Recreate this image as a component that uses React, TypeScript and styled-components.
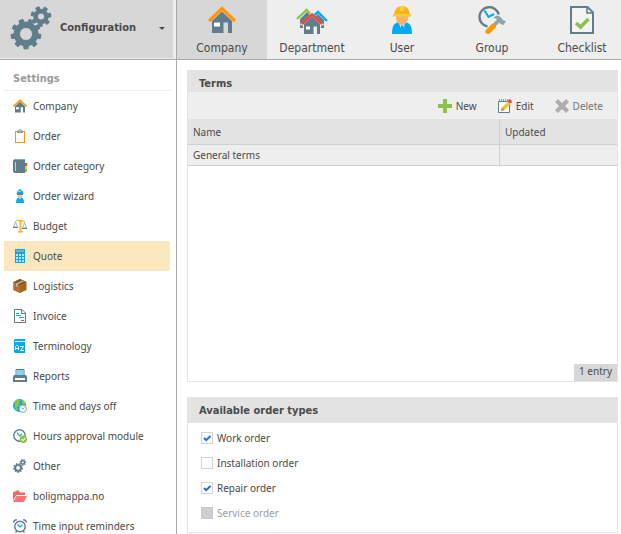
import React, { useState } from "react";
import styled, { createGlobalStyle } from "styled-components";

const color = {
  slate: "#607d8b",
  orange: "#ff9800",
  blue: "#03a9f4",
  green: "#8bc34a",
  red: "#f44336",
  text: "#4a4a4a",
  line: "#a9a9a9",
  head: "#e3e3e3",
  pale: "#eeeeee",
  grey: "#d7d7d7",
};

const displayFont = `"DejaVu Sans Condensed", Tahoma, "Noto Sans", sans-serif`;

const GlobalStyle = createGlobalStyle`
  * { box-sizing: border-box; }
  body {
    margin: 0;
    background: #fff;
    color: ${color.text};
    font-family: "Noto Sans", "Open Sans", sans-serif;
    font-size: 10px;
    line-height: 14px;
  }
  button, input { font: inherit; color: inherit; margin: 0; }
`;

/* ---------- icons ---------- */

function gearPath(cx: number, cy: number, outer: number, root: number, hole: number, teeth: number, turn: number) {
  const step = (Math.PI * 2) / teeth;
  const points: string[] = [];
  for (let i = 0; i < teeth; i++) {
    const a = turn + i * step;
    const corners: [number, number][] = [
      [root, -0.27],
      [outer, -0.2],
      [outer, 0.2],
      [root, 0.27],
    ];
    corners.forEach(([r, k]) => {
      const t = a + k * step;
      points.push(`${(cx + r * Math.cos(t)).toFixed(2)} ${(cy + r * Math.sin(t)).toFixed(2)}`);
    });
  }
  return (
    `M${points.join("L")}Z` +
    `M${cx - hole} ${cy}a${hole} ${hole} 0 1 0 ${hole * 2} 0a${hole} ${hole} 0 1 0 ${-hole * 2} 0Z`
  );
}

const GearsIcon = ({ size }: { size: number }) => (
  <svg width={size} height={size} viewBox="0 0 44 44" aria-hidden="true">
    <g fill={color.slate} fillRule="evenodd" stroke={color.slate} strokeWidth="1" strokeLinejoin="round">
      <path d={gearPath(16, 28, 15, 12, 6.5, 9, Math.PI / 2)} />
      <path d={gearPath(31, 10.5, 10, 7.3, 3.6, 7, -0.15)} />
    </g>
  </svg>
);

const HouseIcon = ({ size }: { size: number }) => (
  <svg width={size} height={size} viewBox="0 0 28 28" aria-hidden="true">
    <path d="M4 15 14 5.500 24 15V27H20V16.500H15.500V27H4Z" fill={color.slate} />
    <path d="M6 16.500H12V20.500H6Z" fill="#fff" />
    <path d="M1 15 14 2.500 27 15" fill="none" stroke={color.orange} strokeWidth="3.200" />
  </svg>
);

const HousesIcon = () => (
  <svg width="32" height="28" viewBox="0 0 32 28" aria-hidden="true">
    <path d="M4 13 11 6 17 12V22H4ZM18 12 22 8 28 14V22H18Z" fill={color.slate} />
    <path d="M1 13 10.500 4 14 7.500" fill="none" stroke={color.green} strokeWidth="2.400" />
    <path d="M18 9.500 22 6 31 15" fill="none" stroke={color.blue} strokeWidth="2.400" />
    <path d="M4 18.500 16 6.500 28 18.500 25 20V28H7V20Z" fill="#eee" />
    <path d="M8 18 16 10.500 24 18V28H21V20.500H17.500V28H8Z" fill={color.slate} />
    <path d="M10 20.500H14V23.500H10Z" fill="#fff" />
    <path d="M6 18 16 8.500 26 18" fill="none" stroke={color.red} strokeWidth="2.600" />
  </svg>
);

const WorkerIcon = () => (
  <svg width="24" height="28" viewBox="0 0 24 28" aria-hidden="true">
    <path d="M2 28C2 20 4 17 8 16.500H16C20 17 22 20 22 28Z" fill={color.blue} />
    <path d="M8.500 16H15.500L12 25Z" fill="#eee" />
    <path d="M12 18.500 13.500 21 12 28 10.500 21Z" fill={color.blue} />
    <path d="M6 9H18V12C18 16 15 19 12 19S6 16 6 12Z" fill="#f6b26b" />
    <path d="M4 10C4 4 7 0 12 0S20 4 20 10Z" fill="#fbb11f" />
    <path d="M9 .500H15L14 5H10Z" fill="#ffd23c" />
    <path d="M3 8H21V10.500H3Z" fill="#ffcb2e" />
  </svg>
);

const ClockHammerIcon = () => (
  <svg width="28" height="28" viewBox="0 0 28 28" aria-hidden="true">
    <path d="M20.800 8.500A9.800 9.800 0 1 0 9.500 20.600" fill="none" stroke={color.slate} strokeWidth="2.400" />
    <path d="M6.500 4.500 10.500 11 16 8" fill="none" stroke={color.blue} strokeWidth="2" />
    <path d="M15 20.500 21 14" stroke="#90a4ae" strokeWidth="3.800" />
    <path d="M15.500 11.500 18.500 9.500 22 10.500 25.500 14.500 28 15 25.500 19 22.500 18 18.500 13Z" fill="#90a4ae" />
    <path d="M10 25.500 15 20.500" stroke={color.orange} strokeWidth="5.200" strokeLinecap="round" />
  </svg>
);

const ChecklistIcon = () => (
  <svg width="24" height="28" viewBox="0 0 24 28" aria-hidden="true">
    <path d="M1 1H17.500L23 6.500V27H1Z" fill="#f3f3f3" stroke={color.slate} strokeWidth="2" />
    <path d="M17 1V7H23" fill="none" stroke={color.slate} strokeWidth="1.600" />
    <path d="M6 17 10.500 21 18.500 13" fill="none" stroke={color.green} strokeWidth="3.600" />
  </svg>
);

const Small = ({ children }: { children: React.ReactNode }) => (
  <svg width="14" height="14" viewBox="0 0 14 14" aria-hidden="true">
    {children}
  </svg>
);

const smallIcons: Record<string, React.ReactNode> = {
  house: <HouseIcon size={14} />,
  gears: <GearsIcon size={14} />,
  clipboard: (
    <Small>
      <rect x="2" y="2" width="10" height="12" fill={color.orange} />
      <rect x="3" y="3" width="8" height="10" fill="#fff" />
      <path d="M4 4V2L5.500 1C6 -.2 8 -.2 8.500 1L10 2V4Z" fill="#90a4ae" />
      <path d="M6.500 1H7.500V2H6.500Z" fill="#fff" />
    </Small>
  ),
  book: (
    <Small>
      <path d="M1.500 0H12V14H1.500L0 12.500V1.500Z" fill={color.slate} />
      <path d="M2.500 3V12" stroke="#c3cfd5" />
      <path d="M1 .5H12" stroke="#90a4ae" />
      <path d="M12 4H14V7H12Z" fill={color.red} />
      <path d="M12 7H14V10H12Z" fill="#f7c64b" />
      <path d="M12 10H14V13H12Z" fill={color.green} />
    </Small>
  ),
  wizard: (
    <Small>
      <path d="M3.500 5 4.500 2 7 0 8.500 1.500 10 2.500 10.500 5Z" fill={color.blue} />
      <path d="M5 2H8V3H5Z" fill="#8cd7fa" />
      <path d="M4 5H10V6H4Z" fill={color.slate} />
      <path d="M4.500 6H9.500V8L7 9.500 4.500 8Z" fill="#f6c9a0" />
      <path d="M3 14C3 10.500 4 9 5.500 8.500L7 10 8.500 8.500C10 9 11 10.500 11 14Z" fill={color.blue} />
    </Small>
  ),
  scales: (
    <Small>
      <path d="M3 1C5 2 6 0 8 1L12 2V3L8.500 2.500V12H10V13.500H5V12H6.500V2.500L3 2Z" fill="#fbb829" />
      <path d="M2.500 2.500 .5 8H4.500ZM11.500 3.500 9.500 9H13.500Z" fill="none" stroke="#90a4ae" strokeWidth=".8" />
      <path d="M0 8H5V9H0ZM9 9H14V10H9Z" fill={color.slate} />
    </Small>
  ),
  calculator: (
    <Small>
      <rect x="2" width="10" height="14" fill={color.blue} />
      <rect x="3" y="1" width="8" height="2" fill="#90a4ae" />
      <path d="M3 5H5V7H3ZM6 5H8V7H6ZM9 5H11V7H9ZM3 8H5V10H3ZM6 8H8V10H6ZM9 8H11V10H9ZM3 11H5V13H3ZM6 11H8V13H6ZM9 11H11V13H9Z" fill="#b9e6fb" />
    </Small>
  ),
  box: (
    <Small>
      <path d="M7 0 13.500 3V11L7 14 .5 11V3Z" fill="#a8651f" />
      <path d="M.5 3 7 6V14L.5 11Z" fill="#b5712b" />
      <path d="M7 0 13.500 3 7 6 .5 3Z" fill="#8a541c" />
      <path d="M3 4.500 9.500 1.500 11 2.200 4.500 5.200V8L3 7.500Z" fill="#b0bec5" />
    </Small>
  ),
  invoice: (
    <Small>
      <path d="M1.500 .5H9L12.500 4V13.500H1.500Z" fill="#fff" stroke={color.slate} />
      <path d="M8.500 .5V4.500H12.500" fill="none" stroke={color.slate} />
      <path d="M3 4.500H6M3 6.500H8M6 8.500H11" stroke={color.blue} />
      <path d="M8 11.500H11" stroke={color.red} />
    </Small>
  ),
  dictionary: (
    <Small>
      <path d="M1 1 2 0H12V14H2L1 13Z" fill={color.blue} />
      <path d="M2 2H12V3H2Z" fill="#e3f5fe" />
      <path d="M2.500 11V7.500L3.500 6.500H4.500L5.500 7.500V11M2.500 9.500H5.500M7 7.500H10.500L7.500 11.500H11" fill="none" stroke="#fff" />
    </Small>
  ),
  printer: (
    <Small>
      <path d="M3 7V.5H11V7" fill="#e8f4fa" stroke={color.slate} />
      <path d="M4 1H10V6H4Z" fill="#81d4fa" />
      <path d="M1 6H13L14 8V13H0V8Z" fill={color.slate} />
      <path d="M2 9H12V11H2Z" fill="#fff" />
    </Small>
  ),
  globe: (
    <Small>
      <circle cx="6.500" cy="6.500" r="6.500" fill={color.blue} />
      <path d="M1 3 4 .500 8 1 6 4 7 6 4 8 5 11 4 12 1.500 9 2 6ZM9 .500 12 3 13 6 9 5Z" fill={color.green} />
      <circle cx="9.800" cy="9.800" r="3.700" fill="#f5f5f5" stroke="#90a4ae" strokeWidth=".9" />
      <path d="M8 8.500 10 10 11.500 8.500" fill="none" stroke="#90a4ae" strokeWidth=".9" />
    </Small>
  ),
  approved: (
    <Small>
      <circle cx="6.500" cy="6.500" r="5.700" fill="#fff" stroke={color.slate} strokeWidth="1.400" />
      <path d="M4 3.500 6.500 7 9 5" fill="none" stroke={color.blue} strokeWidth="1.200" />
      <circle cx="10.300" cy="10.300" r="3.700" fill={color.green} />
      <path d="M8.500 10.300 10 11.700 12.200 9" fill="none" stroke="#fff" strokeWidth="1.100" />
    </Small>
  ),
  folder: (
    <Small>
      <path d="M0 3 2 2.500 5 1 7 3.500H12V6H4L0 12Z" fill="#f4686a" />
      <path d="M3.500 6 12 6V7H3.500L0 13V11.500Z" fill="#fff" />
      <path d="M3.500 7H14L11 13H0Z" fill="#ff7173" />
    </Small>
  ),
  alarm: (
    <Small>
      <path d="M.7 3.500C.7 2 2 .8 3.800 .8M13.300 3.500C13.300 2 12 .8 10.200 .8" fill="none" stroke={color.slate} strokeWidth="1.500" />
      <path d="M2.500 13.500 4 12M11.500 13.500 10 12" stroke={color.slate} strokeWidth="1.400" />
      <circle cx="7" cy="7.500" r="5.200" fill="#fff" stroke={color.slate} strokeWidth="1.400" />
      <path d="M4.500 5.500 7 8 9.500 6" fill="none" stroke={color.blue} strokeWidth="1.300" />
    </Small>
  ),
  plus: (
    <Small>
      <path d="M5 0H9V5H14V9H9V14H5V9H0V5H5Z" fill={color.green} />
    </Small>
  ),
  edit: (
    <Small>
      <path d="M.5 13.500V2.500H11.500V13.500Z" fill="#fff" stroke={color.slate} />
      <path d="M1 1H10" stroke="#90a4ae" strokeWidth="2" strokeDasharray="1 1" />
      <path d="M3 12 4 8.500 10 2.500 12.500 5 6.500 11Z" fill="#fbc02d" />
      <path d="M3 12 4 8.500 6.500 11Z" fill="#a1887f" />
      <path d="M9.500 3 12 5.500" stroke="#b0bec5" />
      <path d="M10 2C10.500 0 12 0 13 1S14 3.500 12.800 4.500Z" fill={color.red} />
    </Small>
  ),
  cross: (
    <Small>
      <path d="M3 0 7 4 11 0 14 3 10 7 14 11 11 14 7 10 3 14 0 11 4 7 0 3Z" fill="#adadad" />
    </Small>
  ),
};

/* ---------- layout ---------- */

const Shell = styled.div`
  display: grid;
  grid-template-columns: 177px minmax(0, 1fr);
  grid-template-rows: 60px minmax(0, 1fr);
  height: 100vh;
`;

const ModuleCell = styled.div`
  padding: 0 3px 1px 0;
  background: ${color.pale};
  border-right: 1px solid ${color.line};
  border-bottom: 1px solid ${color.line};
`;

const ModuleButton = styled.button`
  display: flex;
  align-items: center;
  gap: 6px;
  width: 100%;
  height: 100%;
  padding: 0 8px 2px 10px;
  border: 0;
  background: ${color.grey};
  font-family: ${displayFont};
  font-size: 11px;
  font-weight: bold;
  text-align: left;
`;

const ModuleName = styled.span`
  flex: 1;
`;

const Caret = styled.span`
  border: 3px solid transparent;
  border-top-color: ${color.text};
  border-bottom: 0;
`;

const Tabs = styled.nav`
  display: flex;
  overflow: hidden;
  background: ${color.pale};
  border-bottom: 1px solid ${color.line};
`;

const Tab = styled.button<{ $active: boolean }>`
  flex: none;
  display: flex;
  flex-direction: column;
  align-items: center;
  gap: 7px;
  width: 90px;
  padding: 6px 0 0;
  border: 0;
  background: ${(p) => (p.$active ? color.grey : "transparent")};
  font-family: ${displayFont};
  font-size: 12px;
`;

const Sidebar = styled.aside`
  padding: 8px 5px 0 4px;
  border-right: 1px solid ${color.line};
  overflow-y: auto;
  scrollbar-width: none;
`;

const SidebarTitle = styled.h2`
  margin: 0;
  padding: 4px 9px 4px;
  border-bottom: 1px solid #ececec;
  color: #9b9b9b;
  font-family: ${displayFont};
  font-size: 11px;
  line-height: 14px;
`;

const SideList = styled.ul`
  margin: 0;
  padding: 0;
  list-style: none;
`;

const SideLink = styled.a<{ $active: boolean }>`
  display: flex;
  align-items: center;
  gap: 6px;
  height: 30px;
  padding: 0 9px;
  margin-right: 1px;
  color: inherit;
  text-decoration: none;
  background: ${(p) => (p.$active ? "#fae7bd" : "transparent")};
`;

const Main = styled.main`
  display: flex;
  flex-direction: column;
  gap: 15px;
  padding: 10px 3px 1px 10px;
  min-width: 0;
`;

const Panel = styled.section<{ $grow?: boolean }>`
  display: flex;
  flex-direction: column;
  flex: ${(p) => (p.$grow ? "1 0 auto" : "none")};
  border: 1px solid ${color.head};
`;

const PanelTitle = styled.h2<{ $tall?: boolean }>`
  margin: 0;
  padding: ${(p) => (p.$tall ? "6px 11px 5px" : "6px 11px 1px")};
  background: ${color.head};
  font-family: ${displayFont};
  font-size: 11px;
  line-height: 14px;
`;

const Toolbar = styled.div`
  display: flex;
  justify-content: flex-end;
  gap: 21px;
  height: 27px;
  padding: 0 14px;
  background: ${color.pale};
`;

const ToolButton = styled.button`
  display: flex;
  align-items: center;
  gap: 4px;
  padding: 0;
  border: 0;
  background: none;

  &:disabled {
    color: #757575;
  }
`;

const Table = styled.table`
  width: 100%;
  table-layout: fixed;
  border-collapse: separate;
  border-spacing: 0;
`;

const HeadCell = styled.th`
  height: 26px;
  padding: 1px 5px 0;
  background: ${color.head};
  border-bottom: 1px solid #d0d0d0;
  font-weight: normal;
  text-align: left;

  & + & {
    width: 118px;
    border-left: 1px solid #d0d0d0;
  }
`;

const Cell = styled.td`
  height: 21px;
  padding: 0 5px;
  background: ${color.pale};
  border-bottom: 1px solid #d0d0d0;

  & + & {
    border-left: 1px solid #d0d0d0;
  }
`;

const Count = styled.div`
  align-self: flex-end;
  margin-top: auto;
  padding: 0 5px 3px;
  background: ${color.grey};
`;

const Options = styled.div`
  padding: 2px 13px 7px;
`;

const Option = styled.label<{ $disabled?: boolean }>`
  display: flex;
  align-items: center;
  gap: 4px;
  height: 25px;
  color: ${(p) => (p.$disabled ? "#9e9e9e" : "inherit")};
`;

const CheckBox = styled.input`
  appearance: none;
  width: 12px;
  height: 12px;
  border: 1px solid #d4d4d4;
  background: #fff;

  &:checked {
    background: #fff
      url("data:image/svg+xml,%3Csvg xmlns='http://www.w3.org/2000/svg' viewBox='0 0 10 10'%3E%3Cpath d='M2 5l2.200 2.200L8.500 3' fill='none' stroke='%231f6fd0' stroke-width='2'/%3E%3C/svg%3E")
      center / 10px 10px no-repeat;
  }

  &:disabled {
    background: #cfcfcf;
    border-color: #c8c8c8;
  }
`;

/* ---------- data ---------- */

const tabs = [
  { name: "Company", icon: <HouseIcon size={28} /> },
  { name: "Department", icon: <HousesIcon /> },
  { name: "User", icon: <WorkerIcon /> },
  { name: "Group", icon: <ClockHammerIcon /> },
  { name: "Checklist", icon: <ChecklistIcon /> },
];

const settings = [
  ["Company", "house"],
  ["Order", "clipboard"],
  ["Order category", "book"],
  ["Order wizard", "wizard"],
  ["Budget", "scales"],
  ["Quote", "calculator"],
  ["Logistics", "box"],
  ["Invoice", "invoice"],
  ["Terminology", "dictionary"],
  ["Reports", "printer"],
  ["Time and days off", "globe"],
  ["Hours approval module", "approved"],
  ["Other", "gears"],
  ["boligmappa.no", "folder"],
  ["Time input reminders", "alarm"],
];

const orderTypes = [
  { name: "Work order", checked: true },
  { name: "Installation order", checked: false },
  { name: "Repair order", checked: true },
  { name: "Service order", checked: false, disabled: true },
];

export default function App() {
  const [tab, setTab] = useState("Company");
  const [setting, setSetting] = useState("Quote");

  return (
    <>
      <GlobalStyle />
      <Shell>
        <ModuleCell>
          <ModuleButton type="button" aria-haspopup="menu">
            <GearsIcon size={44} />
            <ModuleName>Configuration</ModuleName>
            <Caret />
          </ModuleButton>
        </ModuleCell>
        <Tabs>
          {tabs.map((t) => (
            <Tab key={t.name} type="button" $active={t.name === tab} onClick={() => setTab(t.name)}>
              {t.icon}
              {t.name}
            </Tab>
          ))}
        </Tabs>
        <Sidebar>
          <SidebarTitle>Settings</SidebarTitle>
          <SideList>
            {settings.map(([name, icon]) => (
              <li key={name}>
                <SideLink href="#" $active={name === setting} onClick={() => setSetting(name)}>
                  {smallIcons[icon]}
                  {name}
                </SideLink>
              </li>
            ))}
          </SideList>
        </Sidebar>
        <Main>
          <Panel $grow>
            <PanelTitle>Terms</PanelTitle>
            <Toolbar>
              <ToolButton type="button">{smallIcons.plus}New</ToolButton>
              <ToolButton type="button">{smallIcons.edit}Edit</ToolButton>
              <ToolButton type="button" disabled>{smallIcons.cross}Delete</ToolButton>
            </Toolbar>
            <Table>
              <thead>
                <tr>
                  <HeadCell scope="col">Name</HeadCell>
                  <HeadCell scope="col">Updated</HeadCell>
                </tr>
              </thead>
              <tbody>
                <tr>
                  <Cell>General terms</Cell>
                  <Cell />
                </tr>
              </tbody>
            </Table>
            <Count>1 entry</Count>
          </Panel>
          <Panel>
            <PanelTitle $tall>Available order types</PanelTitle>
            <Options>
              {orderTypes.map((o) => (
                <Option key={o.name} $disabled={o.disabled}>
                  <CheckBox type="checkbox" defaultChecked={o.checked} disabled={o.disabled} />
                  {o.name}
                </Option>
              ))}
            </Options>
          </Panel>
        </Main>
      </Shell>
    </>
  );
}
